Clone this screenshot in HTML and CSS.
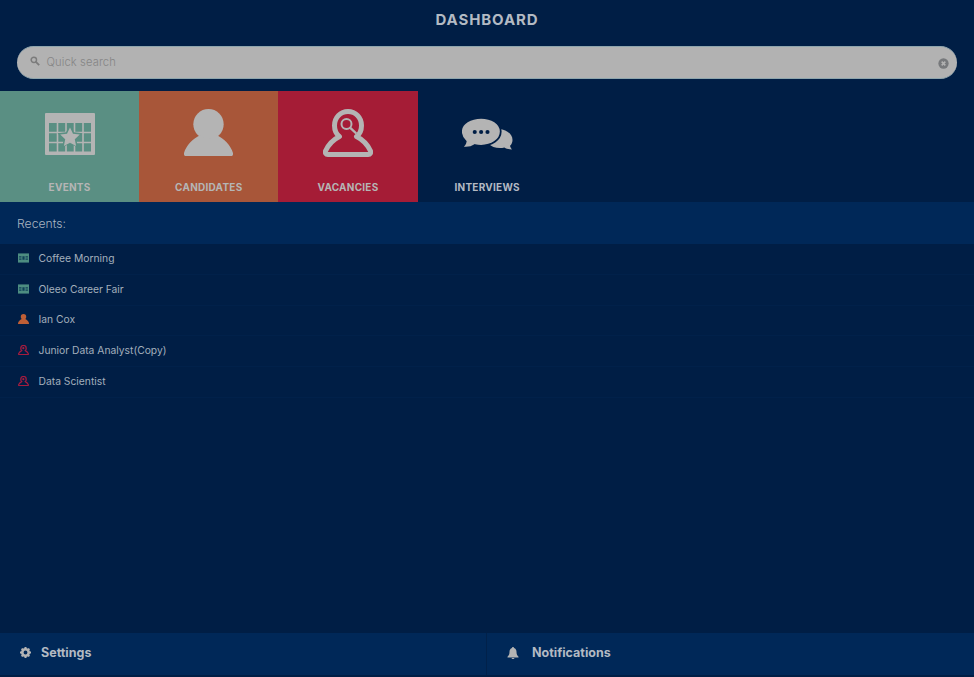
FILE: index.html
```html
<!DOCTYPE html>
<html lang="en">
<head>
<meta charset="utf-8">
<title>Dashboard</title>
<link rel="stylesheet" href="styles.css">
</head>
<body>
<div class="app">
  <header class="title">DASHBOARD</header>
  <div class="search-wrap">
    <div class="search">
      <svg class="search-icon" viewBox="0 0 12 12"><circle cx="4.600" cy="4.600" r="3.200" fill="none" stroke="#7b7b7b" stroke-width="1.800"/><path d="M7 7l4 4" stroke="#7b7b7b" stroke-width="2.200"/></svg>
      <span class="placeholder">Quick search</span>
      <svg class="clear-icon" viewBox="0 0 12 12"><circle cx="6" cy="6" r="5.600" fill="#77797c"/><path d="M4 4l4 4M8 4l-4 4" stroke="#b2b2b2" stroke-width="1.700"/></svg>
    </div>
  </div>
  <nav class="tiles">
    <div class="tile tile-events">
      <svg class="tile-icon" viewBox="0 0 50 42"><path fill="#b4b4b4" fill-rule="evenodd" d="M1 0h48a1 1 0 0 1 1 1v40a1 1 0 0 1-1 1H1a1 1 0 0 1-1-1V1a1 1 0 0 1 1-1zM4 10v28.500h42V10z"/><path stroke="#b4b4b4" stroke-width="1.600" d="M12.500 10v29M21 10v29M29.500 10v29M38 10v29M4 19.500h42M4 29.500h42"/><path fill="#5a8f83" d="M25 11.500l4 7.700 8.500 1.100-6.200 5.900 1.600 8.300-7.900-4.100-7.900 4.100 1.600-8.300-6.200-5.900 8.500-1.100z"/><path fill="#b4b4b4" d="M25 14.500l3 6.200 6.800.9-5 4.700 1.300 6.700-6.100-3.300-6.100 3.300 1.300-6.700-5-4.700 6.800-.9z"/></svg>
      <span class="tile-label">EVENTS</span>
    </div>
    <div class="tile tile-candidates">
      <svg class="tile-icon" viewBox="0 0 50 48"><circle cx="25" cy="15.500" r="15.500" fill="#b4b4b4"/><path fill="#b4b4b4" d="M17 26.500c2 2.500 5 3.500 8 3.500s6-1 8-3.500c8 3.500 15 11 17 18.500 .4 1.700-.6 3-2 3H2c-1.400 0-2.400-1.300-2-3 2-7.500 9-15 17-18.500z"/></svg>
      <span class="tile-label">CANDIDATES</span>
    </div>
    <div class="tile tile-vacancies">
      <svg class="tile-icon" viewBox="0 0 50 48"><path fill="none" stroke="#b4b4b4" stroke-width="5" stroke-linejoin="round" d="M16.500 27.500C13 25 11.500 20.500 11.500 16.500 11.500 8.500 17.500 2.500 25 2.500s13.500 6 13.500 14c0 4-1.500 8.500-5 11 6 3 11.500 9 14 14.500.6 1.800-.3 3.500-2.300 3.500H4.800c-2 0-2.900-1.700-2.300-3.500 2.500-5.500 8-11.500 14-14.500z"/><circle cx="23.500" cy="15" r="5" fill="none" stroke="#b4b4b4" stroke-width="2"/><path stroke="#b4b4b4" stroke-width="2.400" d="M27.300 18.800l6 5.700"/></svg>
      <span class="tile-label">VACANCIES</span>
    </div>
    <div class="tile tile-interviews">
      <svg class="tile-icon" viewBox="0 0 52 32"><path fill="#b4b4b4" d="M38 11c7 .5 13.500 5 13.500 11 0 2.500-1 4.500-2.500 6 .2 1.300.8 2.500 2 3.800-3 0-5.800-.8-7.800-2-1.500.4-3 .6-4.500.6-5 0-9-1.800-11.500-4.500z"/><path fill="#b4b4b4" stroke="#001e45" stroke-width="1.800" d="M19.500 -.5c10.500 0 20 5.500 20 14s-9.500 14.500-20 14.500c-2.200 0-4.400-.3-6.300-.8C9.500 29.800 5 30.500 -.5 29.500c2.500-1.500 4-3.500 4.300-6C1 21 -1 17.500 -1 13.500-1 5 9 -.5 19.500 -.5z"/><circle cx="13" cy="14" r="2.100" fill="#001e45"/><circle cx="19.500" cy="14" r="2.100" fill="#001e45"/><circle cx="26" cy="14" r="2.100" fill="#001e45"/></svg>
      <span class="tile-label">INTERVIEWS</span>
    </div>
  </nav>
  <div class="recents-head">Recents:</div>
  <ul class="recents">
    <li class="recent">
      <svg class="recent-icon" viewBox="0 0 12 10"><path fill="#4d8d81" d="M0 0h12v10H0z"/><path fill="#0f3f58" d="M1.200 3h2.600v1.400H1.200zM8.200 3h2.600v1.400H8.200zM1.200 5.600h2.600V7H1.200zM8.200 5.600h2.600V7H8.200zM4.800 3h2.400v4H4.800z"/></svg>
      <span>Coffee Morning</span>
    </li>
    <li class="recent">
      <svg class="recent-icon" viewBox="0 0 12 10"><path fill="#4d8d81" d="M0 0h12v10H0z"/><path fill="#0f3f58" d="M1.200 3h2.600v1.400H1.200zM8.200 3h2.600v1.400H8.200zM1.200 5.600h2.600V7H1.200zM8.200 5.600h2.600V7H8.200zM4.800 3h2.400v4H4.800z"/></svg>
      <span>Oleeo Career Fair</span>
    </li>
    <li class="recent">
      <svg class="recent-icon" viewBox="0 0 12 11"><circle cx="6" cy="3" r="3" fill="#bf5f36"/><path fill="#bf5f36" d="M4 5.500h4c2 .8 3.500 2.500 4 4.500v1H0v-1c.5-2 2-3.700 4-4.500z"/></svg>
      <span>Ian Cox</span>
    </li>
    <li class="recent">
      <svg class="recent-icon" viewBox="0 0 12 11"><path fill="none" stroke="#a51c3f" stroke-width="1.400" d="M4 6.200C3.200 5.400 3 4.500 3 3.500a3 3 0 0 1 6 0c0 1-.2 1.900-1 2.700 1.500.7 2.800 2 3.300 3.300.2.600 0 1-.5 1H1.200c-.5 0-.7-.4-.5-1C1.200 8.200 2.500 6.900 4 6.200z"/><circle cx="5.800" cy="3.500" r="1.200" fill="#a51c3f"/></svg>
      <span>Junior Data Analyst(Copy)</span>
    </li>
    <li class="recent">
      <svg class="recent-icon" viewBox="0 0 12 11"><path fill="none" stroke="#a51c3f" stroke-width="1.400" d="M4 6.200C3.200 5.400 3 4.500 3 3.500a3 3 0 0 1 6 0c0 1-.2 1.900-1 2.700 1.500.7 2.800 2 3.300 3.300.2.600 0 1-.5 1H1.200c-.5 0-.7-.4-.5-1C1.200 8.200 2.500 6.900 4 6.200z"/><circle cx="5.800" cy="3.500" r="1.200" fill="#a51c3f"/></svg>
      <span>Data Scientist</span>
    </li>
  </ul>
  <footer class="footer">
    <div class="foot-item foot-settings">
      <svg class="foot-icon" viewBox="0 0 12 12"><circle cx="6" cy="6" r="3.500" fill="none" stroke="#b4b4b4" stroke-width="2.800"/><path stroke="#b4b4b4" stroke-width="2.200" d="M6 0v2.500M6 9.500V12M0 6h2.500M9.500 6H12M1.800 1.800l1.700 1.700M8.500 8.500l1.700 1.700M1.800 10.200l1.700-1.700M8.500 3.500l1.700-1.700"/></svg>
      <span>Settings</span>
    </div>
    <div class="foot-item foot-notifications">
      <svg class="foot-icon" viewBox="0 0 12 12"><path fill="#b4b4b4" d="M6 0c.7 0 1 .5 1 1 1.700.5 2.500 2 2.500 3.800 0 2.500.7 3.800 2 5V10.500H.5v-.7c1.300-1.200 2-2.500 2-5C2.500 3 3.300 1.500 5 1c0-.5.300-1 1-1zM4.600 11h2.800c0 .6-.6 1-1.400 1s-1.400-.4-1.400-1z"/></svg>
      <span>Notifications</span>
    </div>
  </footer>
</div>
</body>
</html>
```
FILE: styles.css
```css
* { box-sizing: border-box; }
html, body { margin: 0; padding: 0; height: 100%; }
body {
  background: #001e45;
  font-family: "Inter", "Liberation Sans", sans-serif;
  color: #b4b8bd;
}
.app {
  height: 677px;
  display: flex;
  flex-direction: column;
  overflow: hidden;
}
.title {
  height: 39px;
  line-height: 39px;
  text-align: center;
  font-size: 15px;
  font-weight: 700;
  letter-spacing: 0.9px;
  color: #b3bac3;
}
.search-wrap { padding: 6.500px 17px 12.500px 16.500px; }
.search {
  height: 33px;
  border-radius: 17px;
  background: #b2b2b2;
  border: 1px solid #8ea5ad;
  border-width: 1px 0;
  display: flex;
  align-items: center;
  padding: 0 8px 0 13px;
}
.search-icon { width: 10px; height: 10px; margin-right: 7px; margin-top: -2px; }
.placeholder { flex: 1; font-size: 11.200px; font-weight: 300; color: #858585; letter-spacing: 0.1px; }
.clear-icon { width: 11px; height: 11px; margin-top: 3px; }
.tiles { display: flex; height: 111px; }
.tile {
  width: 139.200px;
  display: flex;
  flex-direction: column;
  align-items: center;
  position: relative;
}
.tile-events { background: #5a8f83; }
.tile-candidates { background: #a85639; }
.tile-vacancies { background: #a51c36; }
.tile-label {
  position: absolute;
  top: 90px;
  left: 0;
  right: 0;
  text-align: center;
  font-size: 10px;
  font-weight: 700;
  letter-spacing: 0.25px;
  color: #b5b5b5;
}
.tile-interviews .tile-label { color: #b3bac3; }
.tile-icon { display: block; }
.tile-events .tile-icon { width: 50px; height: 42px; margin-top: 22px; }
.tile-candidates .tile-icon { width: 49px; height: 47px; margin-top: 18px; }
.tile-vacancies .tile-icon { width: 50px; height: 48px; margin-top: 18px; }
.tile-interviews .tile-icon { width: 51px; height: 32px; margin-top: 27px; }
.recents-head {
  height: 42px;
  background: #002858;
  display: flex;
  align-items: center;
  padding-left: 17px;
  font-size: 12.200px;
  font-weight: 300;
  color: #a9b4c0;
}
.recents { list-style: none; margin: 0; padding: 0; flex: 1; }
.recent {
  height: 30.750px;
  display: flex;
  align-items: center;
  padding-left: 18px;
  padding-bottom: 2px;
  font-size: 10.300px;
  color: #a3afbc;
  border-bottom: 1px solid #01214a;
}
.recent-icon { width: 11px; height: 10px; margin-right: 9.500px; flex: none; }
.footer {
  display: flex;
  height: 42px;
  margin-bottom: 2.500px;
  background: #002858;
}
.foot-item {
  width: 50%;
  display: flex;
  align-items: center;
  font-size: 12.500px;
  font-weight: 700;
  color: #b3bac3;
  padding-bottom: 2px;
}
.foot-settings { padding-left: 20px; border-right: 1px solid #01214a; }
.foot-notifications { padding-left: 20px; }
.foot-icon { width: 11px; height: 11px; margin-right: 10px; }
.foot-notifications .foot-icon { width: 12px; height: 12px; margin-right: 13px; }
```
